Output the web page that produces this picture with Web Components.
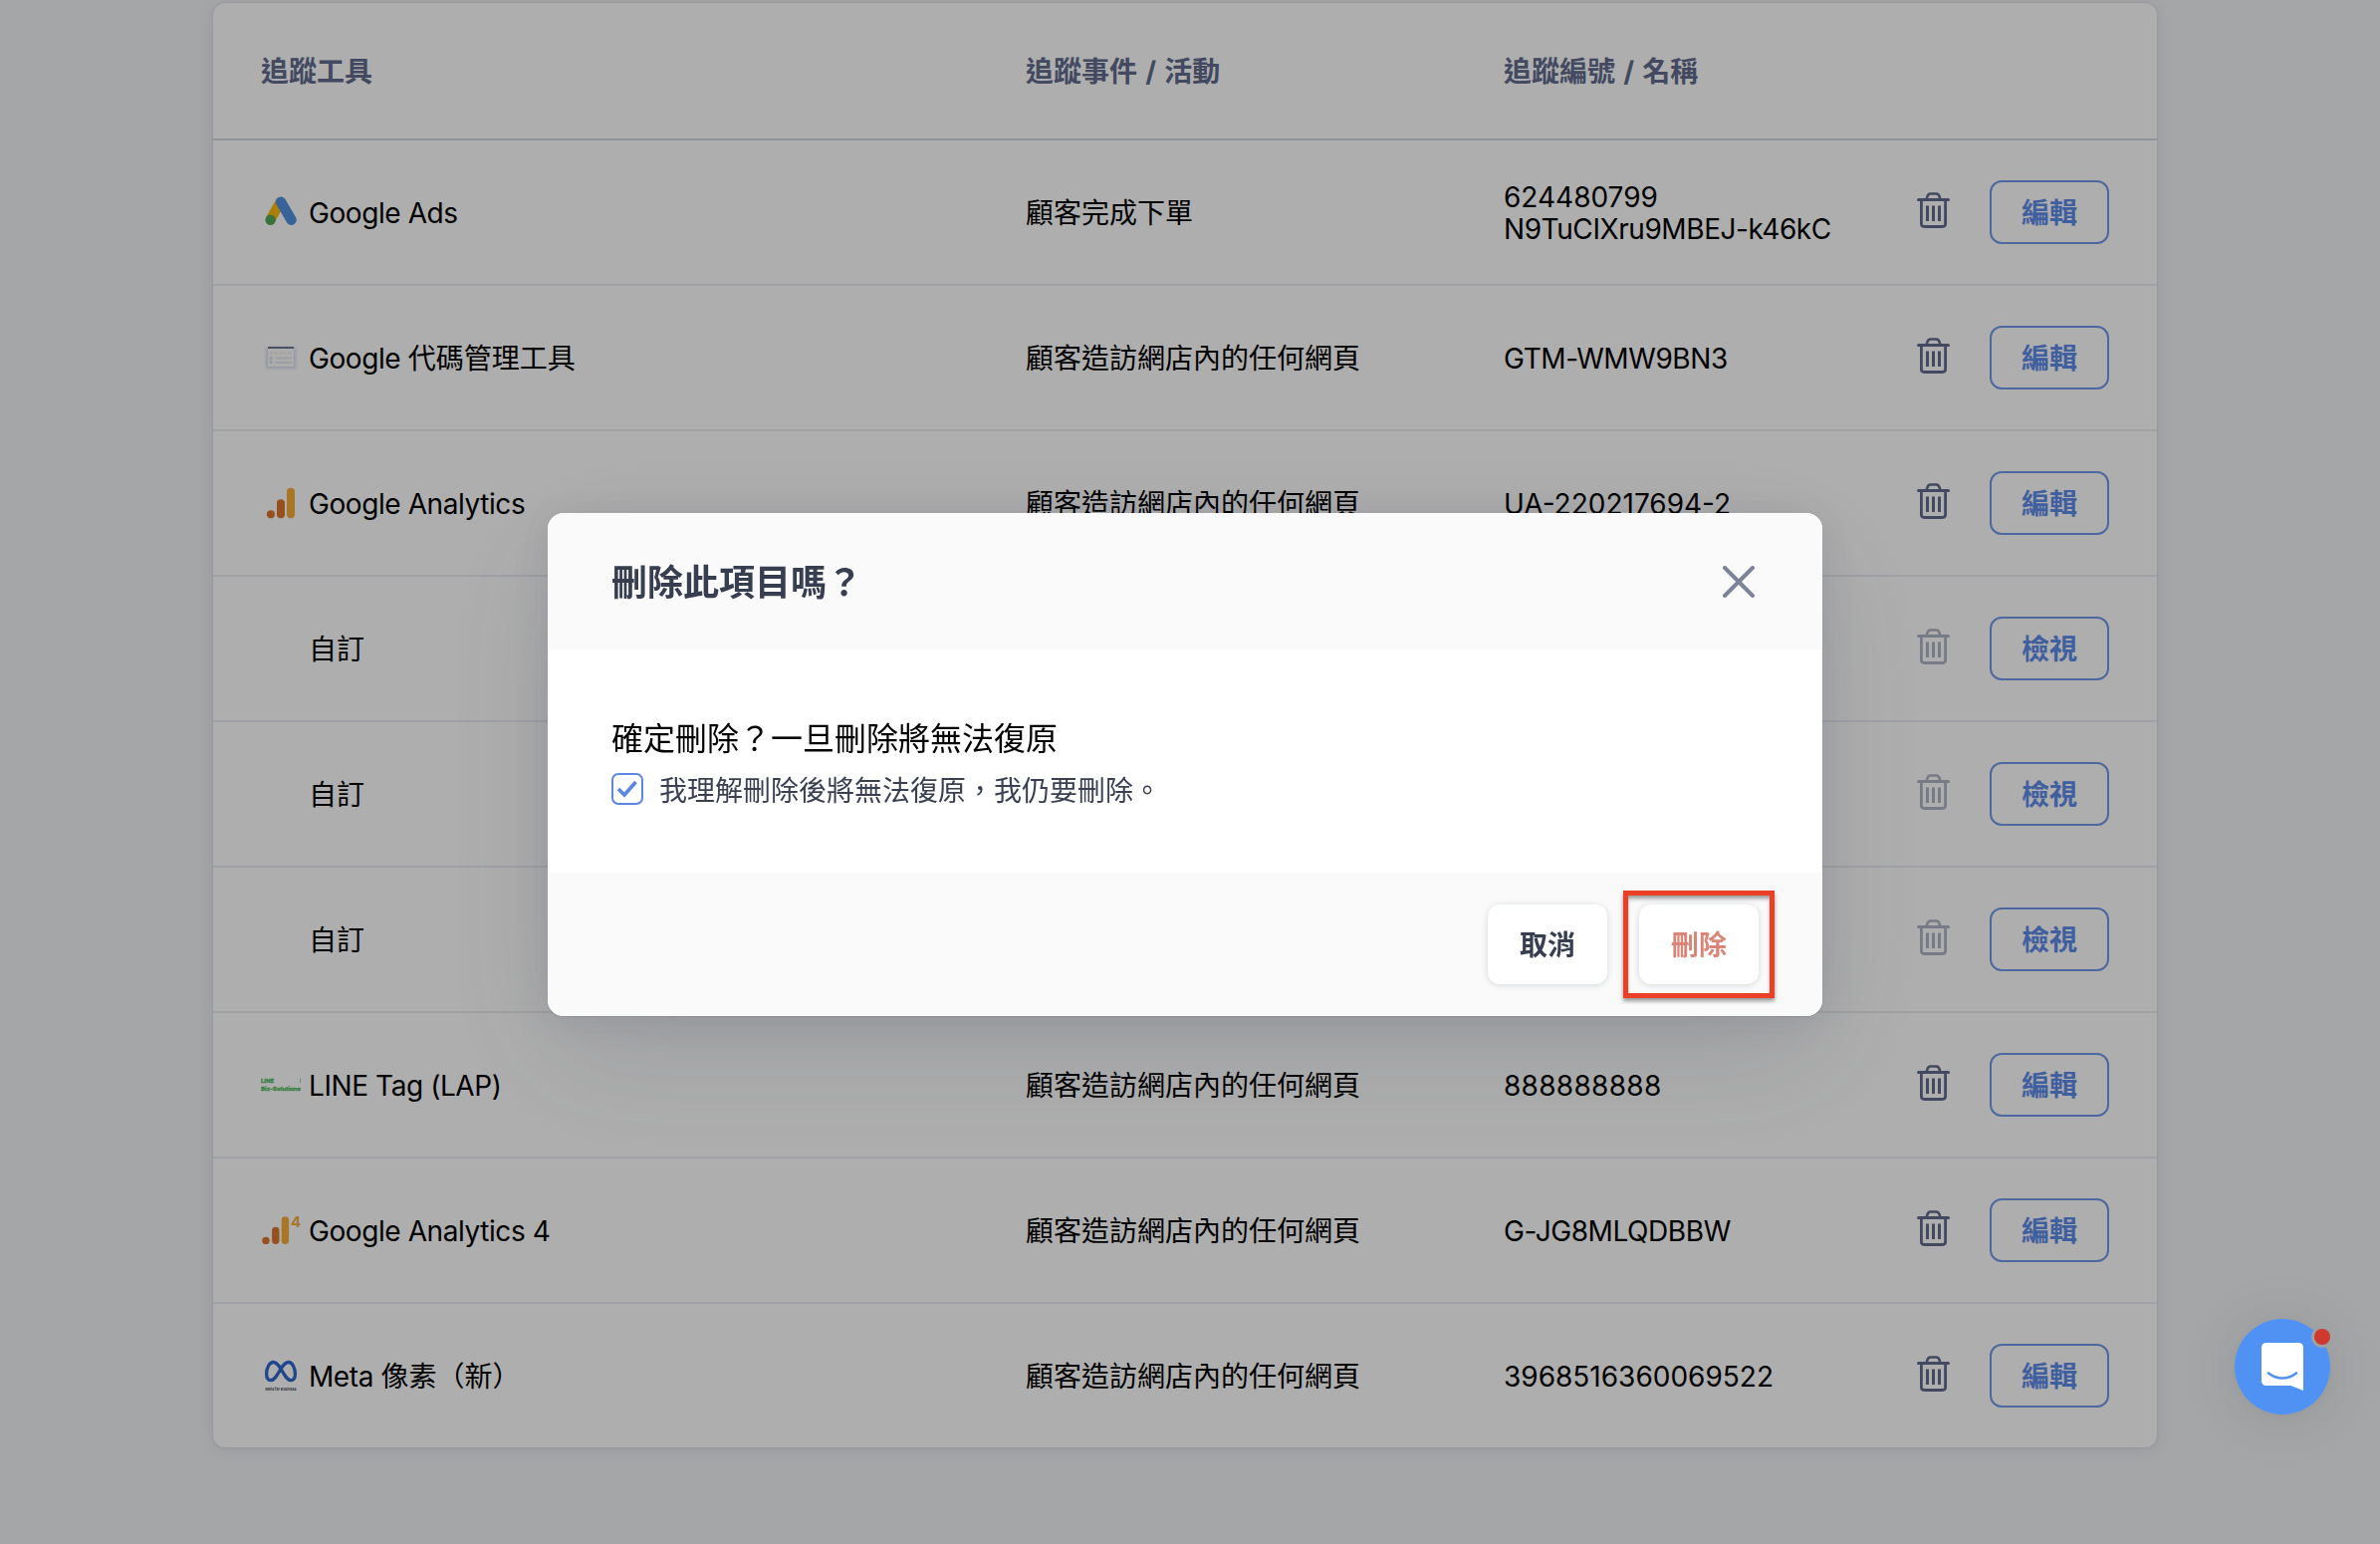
<!DOCTYPE html>
<html lang="zh-Hant">
<head>
<meta charset="utf-8">
<title>追蹤工具</title>
<style>
    html, body {
        margin: 0;
        height: 100%;
        overflow: hidden;
    }
    body {
        background: #f1f3f6;
        color: #000;
        font: 28px/32px Inter, "Noto Sans CJK TC", sans-serif;
    }
</style>
</head>
<body>
<tracking-table>
    <tracking-row icon="ads" name="Google Ads" event="顧客完成下單" code="624480799|N9TuCIXru9MBEJ-k46kC" action="編輯"></tracking-row>
    <tracking-row icon="gtm" name="Google 代碼管理工具" event="顧客造訪網店內的任何網頁" code="GTM-WMW9BN3" action="編輯"></tracking-row>
    <tracking-row icon="ga" name="Google Analytics" event="顧客造訪網店內的任何網頁" code="UA-220217694-2" action="編輯"></tracking-row>
    <tracking-row name="自訂" action="檢視" locked></tracking-row>
    <tracking-row name="自訂" action="檢視" locked></tracking-row>
    <tracking-row name="自訂" action="檢視" locked></tracking-row>
    <tracking-row icon="line" name="LINE Tag (LAP)" event="顧客造訪網店內的任何網頁" code="888888888" action="編輯"></tracking-row>
    <tracking-row icon="ga4" name="Google Analytics 4" event="顧客造訪網店內的任何網頁" code="G-JG8MLQDBBW" action="編輯"></tracking-row>
    <tracking-row icon="meta" name="Meta 像素（新）" event="顧客造訪網店內的任何網頁" code="3968516360069522" action="編輯"></tracking-row>
</tracking-table>

<confirm-dialog>
    <span slot="title">刪除此項目嗎？</span>
    <span>確定刪除？一旦刪除將無法復原</span>
    <check-box slot="confirm">我理解刪除後將無法復原，我仍要刪除。</check-box>
    <dialog-button slot="actions">取消</dialog-button>
    <dialog-button slot="actions" danger>刪除</dialog-button>
</confirm-dialog>

<chat-launcher></chat-launcher>

<script>
const ICONS = {
    ads: `
        <path d="M20 9L9.800 27" stroke="#fbbc04" stroke-width="10" stroke-linecap="butt"/>
        <path d="M20.100 9.800L30.600 27.800" stroke="#5391e0" stroke-width="10.400" stroke-linecap="round"/>
        <circle cx="9.600" cy="27.800" r="5.200" fill="#53a958"/>`,
    gtm: `
        <rect x="5" y="10" width="30" height="21" rx="1" fill="#8d9bc4" opacity=".35" filter="url(#soft)"/>
        <rect x="7" y="9" width="26" height="20" fill="#fcfcfe"/>
        <path d="M7 10H33" stroke="#6b7992" stroke-width="2"/>
        <path d="M9 15.500H31" stroke="#f3f0e8" stroke-width="3" stroke-dasharray="3 1.500"/>
        <path d="M10 19V27" stroke="#cfe0f0" stroke-width="2.500" stroke-dasharray="3 1"/>
        <path d="M14.500 20.500H31M14.500 25H31" stroke="#e3e9f0" stroke-width="2"/>
        <filter id="soft" x="-20%" y="-20%" width="140%" height="150%"><feGaussianBlur stdDeviation="1.700"/></filter>`,
    ga: `
        <path d="M30 8.800V31.200" stroke="#f5ad38" stroke-width="8" stroke-linecap="round"/>
        <path d="M20 20.300V31.200" stroke="#dc762c" stroke-width="8" stroke-linecap="round"/>
        <circle cx="9.900" cy="31.300" r="4" fill="#dc762c"/>`,
    ga4: `
        <path d="M24.400 10V30.200" stroke="#f5ad38" stroke-width="7.400" stroke-linecap="round"/>
        <path d="M14.800 20.500V30.200" stroke="#dc762c" stroke-width="7.400" stroke-linecap="round"/>
        <circle cx="5" cy="30.400" r="3.700" fill="#dc762c"/>
        <text x="30" y="17" font-size="15" font-weight="700" fill="#f5ad38">4</text>`,
    line: `
        <text x="0" y="18" font-size="5.400" font-weight="700" fill="#4fb95c" stroke="#4fb95c" stroke-width=".3" textLength="13" lengthAdjust="spacingAndGlyphs">LINE</text>
        <text x="0" y="25.500" font-size="5.400" font-weight="700" fill="#4fb95c" stroke="#4fb95c" stroke-width=".3" textLength="40" lengthAdjust="spacingAndGlyphs">Biz-Solutions</text>
        <path d="M39.500 13.500V18" stroke="#4fb95c" opacity=".6"/>`,
    meta: `
        <path d="M20 13C16.500 7.500 14.500 6.500 12.300 6.500C8.500 6.500 5.600 12.500 5.600 18C5.600 22 7.200 24.700 10 24.700C13 24.700 15 22 20 13C23.500 7.500 25.500 6.500 28 6.500C31.500 6.500 34.400 12.500 34.400 18C34.400 22 32.800 24.700 30 24.700C27 24.700 25 22 20 13" stroke="#2f67cc" stroke-width="3.300" stroke-linejoin="round"/>
        <text x="4.500" y="34.500" font-size="4" font-weight="700" fill="#4a5060" textLength="31" lengthAdjust="spacingAndGlyphs">Meta for Business</text>`
};

class ToolIcon extends HTMLElement {
    constructor() {
        super();
        this.attachShadow({mode: "open"});
    }

    connectedCallback() {
        this.shadowRoot.innerHTML = `
        <style>
            :host {
                display: block;
                width: 40px;
                height: 40px;
                flex: none;
            }
            svg {
                display: block;
            }
        </style>
        <svg width="40" height="40" viewBox="0 0 40 40" fill="none">${ICONS[this.getAttribute("name")] || ""}</svg>`;
    }
}

class TrashIcon extends HTMLElement {
    constructor() {
        super();
        this.attachShadow({mode: "open"}).innerHTML = `
        <style>
            :host {
                display: block;
                width: 34px;
                height: 36px;
                color: #626b8d;
            }
            :host([disabled]) {
                opacity: .5;
            }
            svg {
                display: block;
            }
        </style>
        <svg width="34" height="36" viewBox="0 0 34 36" fill="none" stroke="currentColor">
            <path d="M1.500 7.500H31.500" stroke-width="3" stroke-linecap="round"/>
            <path d="M10 7V5.500Q11 1.500 13.500 1.500H19.500Q22 1.500 23 5.500V7" stroke-width="2.600"/>
            <path d="M4.400 8V31.500Q4.400 34.500 7.400 34.500H25.600Q28.600 34.500 28.600 31.500V8" stroke-width="2.800"/>
            <path d="M10.500 13.500V29M16.500 13.500V29M22.500 13.500V29" stroke-width="3"/>
        </svg>`;
    }
}

class OutlineButton extends HTMLElement {
    constructor() {
        super();
        this.attachShadow({mode: "open"}).innerHTML = `
        <style>
            :host {
                display: block;
                flex: none;
            }
            button {
                display: block;
                width: 120px;
                height: 64px;
                padding: 2px 0 0;
                border: 2px solid #7199ea;
                border-radius: 12px;
                background: transparent;
                color: #5f8bea;
                font: inherit;
                font-weight: 700;
                cursor: pointer;
            }
        </style>
        <button><slot></slot></button>`;
    }
}

class TrackingRow extends HTMLElement {
    constructor() {
        super();
        this.attachShadow({mode: "open"});
    }

    connectedCallback() {
        const attr = name => this.getAttribute(name) || "";
        const spacing = code => {
            if (/^\d+$/.test(code)) return code.startsWith("888") ? "wide" : "";
            return code.startsWith("UA") ? "" : "tight";
        };
        const codes = attr("code").split("|").map(code => `<div><span class="code ${spacing(code)}">${code}</span></div>`).join("");
        const name = attr("name").replace(/^[\x20-\x7e]+/, latin => `<span class="tight">${latin}</span>`);

        this.shadowRoot.innerHTML = `
        <style>
            :host {
                display: grid;
                grid-template-columns: 768px 480px 1fr auto auto;
                align-items: center;
                box-sizing: border-box;
                height: 146px;
                padding: 0 48px;
                border-bottom: 2px solid #ebecf2;
            }
            :host(:last-of-type) {
                height: 144px;
                border-bottom: 0;
            }
            .name {
                display: flex;
                align-items: center;
                gap: 8px;
            }
            .label, .event {
                padding-top: 2px;
            }
            .codes {
                padding-top: 1px;
            }
            .code {
                white-space: nowrap;
            }
            .tight {
                letter-spacing: -.42px;
            }
            .wide {
                letter-spacing: .3px;
            }
            trash-icon {
                margin: -4px 39px 0 0;
            }
        </style>
        <div class="name"><tool-icon name="${attr("icon")}"></tool-icon><span class="label">${name}</span></div>
        <div class="event">${attr("event")}</div>
        <div class="codes">${codes}</div>
        <trash-icon ${this.hasAttribute("locked") ? "disabled" : ""}></trash-icon>
        <outline-button>${attr("action")}</outline-button>`;
    }
}

class TrackingTable extends HTMLElement {
    constructor() {
        super();
        this.attachShadow({mode: "open"}).innerHTML = `
        <style>
            :host {
                display: block;
                width: 1952px;
                margin: 0 auto;
                padding: 3px 10px 0 0;
            }
            .card {
                border-radius: 12px;
                background: #fff;
                box-shadow: 0 0 2px rgba(60, 70, 90, .2), 0 2px 16px rgba(60, 70, 90, .1);
            }
            .head {
                display: grid;
                grid-template-columns: 768px 480px 1fr;
                align-items: center;
                box-sizing: border-box;
                height: 138px;
                padding: 1px 48px 0;
                border-bottom: 2px solid #d5dbe0;
                color: #626b8d;
                font-weight: 700;
                word-spacing: 1.5px;
            }
        </style>
        <div class="card">
            <div class="head">
                <div>追蹤工具</div>
                <div>追蹤事件 / 活動</div>
                <div>追蹤編號 / 名稱</div>
            </div>
            <slot></slot>
        </div>`;
    }
}

class CheckBox extends HTMLElement {
    constructor() {
        super();
        this.attachShadow({mode: "open"}).innerHTML = `
        <style>
            :host {
                display: flex;
                align-items: center;
                gap: 16px;
                height: 32px;
                color: #3a4052;
                font-size: 28px;
                line-height: 32px;
            }
            svg {
                flex: none;
            }
            .label {
                padding-top: 4px;
            }
        </style>
        <svg width="32" height="32" viewBox="0 0 32 32" fill="none" stroke="#5c86e0">
            <rect x="1" y="1" width="30" height="30" rx="6" stroke-width="2"/>
            <path d="M7 16L13 22L24.500 9" stroke-width="3.600"/>
        </svg>
        <span class="label"><slot></slot></span>`;
    }
}

class DialogButton extends HTMLElement {
    constructor() {
        super();
        this.attachShadow({mode: "open"}).innerHTML = `
        <style>
            :host {
                display: block;
                padding: 9px 11px;
                border: 5px solid transparent;
            }
            :host([danger]) {
                border-color: #eb4026;
                box-shadow: 0 3px 4px rgba(0, 0, 0, .4), inset 0 4px 4px -1px rgba(0, 0, 0, .4);
            }
            button {
                display: block;
                width: 120px;
                height: 80px;
                padding: 1px 0 0;
                border: 0;
                border-radius: 12px;
                background: #fff;
                box-shadow: 0 1px 6px rgba(60, 75, 90, .2);
                color: #373e4f;
                font: inherit;
                font-weight: 700;
                cursor: pointer;
            }
            :host([danger]) button {
                color: #da8578;
            }
        </style>
        <button><slot></slot></button>`;
    }
}

class ConfirmDialog extends HTMLElement {
    constructor() {
        super();
        this.attachShadow({mode: "open"}).innerHTML = `
        <style>
            :host {
                position: fixed;
                inset: 0;
                box-sizing: border-box;
                display: flex;
                justify-content: center;
                align-items: flex-start;
                padding: 515px 10px 0 0;
                background: rgba(0, 0, 0, .318);
            }
            .dialog {
                width: 1280px;
                border-radius: 16px;
                overflow: hidden;
                background: #fff;
                box-shadow: 0 1px 1px rgba(30, 35, 50, .1), 0 4px 36px rgba(50, 60, 80, .12), 0 40px 120px rgba(50, 60, 80, .14);
            }
            header {
                display: flex;
                justify-content: space-between;
                align-items: center;
                height: 137px;
                padding: 0 64px;
                background: #fafafa;
                color: #373e4f;
                font-size: 36px;
                font-weight: 700;
                line-height: 48px;
            }
            header div {
                padding-top: 2px;
            }
            header svg {
                margin-right: 4px;
            }
            main {
                box-sizing: border-box;
                height: 224px;
                padding: 66px 64px 0;
                font-size: 32px;
                line-height: 48px;
            }
            .confirm {
                margin-top: 10px;
            }
            footer {
                display: flex;
                justify-content: flex-end;
                align-items: center;
                height: 144px;
                padding: 0 48px;
                background: #fafafa;
            }
        </style>
        <section class="dialog">
            <header>
                <div><slot name="title"></slot></div>
                <svg width="32" height="32" viewBox="0 0 32 32" fill="none" stroke="#7d8499" stroke-width="4" stroke-linecap="round">
                    <path d="M2 2L30 30M30 2L2 30"/>
                </svg>
            </header>
            <main>
                <div><slot></slot></div>
                <div class="confirm"><slot name="confirm"></slot></div>
            </main>
            <footer><slot name="actions"></slot></footer>
        </section>`;
    }
}

class ChatLauncher extends HTMLElement {
    constructor() {
        super();
        this.attachShadow({mode: "open"}).innerHTML = `
        <style>
            :host {
                position: fixed;
                right: 50px;
                bottom: 130px;
                width: 96px;
                height: 96px;
                border-radius: 50%;
                box-shadow: 0 2px 12px rgba(0, 0, 0, .04), 0 4px 64px rgba(0, 0, 0, .1);
            }
            svg {
                display: block;
            }
        </style>
        <svg width="96" height="96" viewBox="0 0 96 96" fill="none">
            <circle cx="48" cy="48" r="48" fill="#4f92f3"/>
            <circle cx="88" cy="18" r="11" fill="#9fa0a2"/>
            <circle cx="88" cy="18" r="8" fill="#cf392e"/>
            <path d="M32 24H64Q69 24 69 29V72L56.500 67H32Q27 67 27 62V29Q27 24 32 24Z" fill="#fff"/>
            <path d="M34 54.500Q40.500 59.500 48 59.500T62 54.500" stroke="#4f92f3" stroke-width="2.600" stroke-linecap="round"/>
        </svg>`;
    }
}

customElements.define("tool-icon", ToolIcon);
customElements.define("trash-icon", TrashIcon);
customElements.define("outline-button", OutlineButton);
customElements.define("tracking-row", TrackingRow);
customElements.define("tracking-table", TrackingTable);
customElements.define("check-box", CheckBox);
customElements.define("dialog-button", DialogButton);
customElements.define("confirm-dialog", ConfirmDialog);
customElements.define("chat-launcher", ChatLauncher);
</script>
</body>
</html>
